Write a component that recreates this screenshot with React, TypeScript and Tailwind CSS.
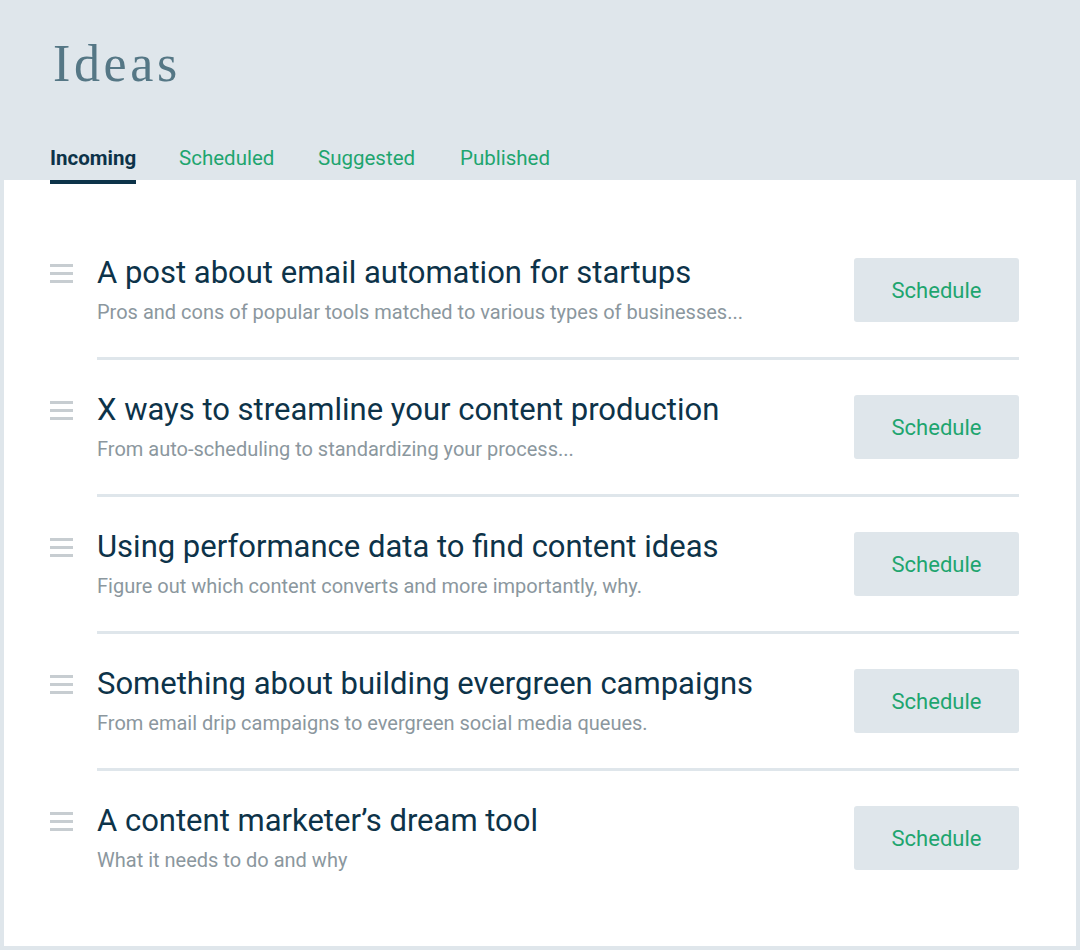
import React from 'react';

type Idea = { title: string; summary: string };

const ideas: Idea[] = [
  {
    title: 'A post about email automation for startups',
    summary: 'Pros and cons of popular tools matched to various types of businesses...',
  },
  {
    title: 'X ways to streamline your content production',
    summary: 'From auto-scheduling to standardizing your process...',
  },
  {
    title: 'Using performance data to find content ideas',
    summary: 'Figure out which content converts and more importantly, why.',
  },
  {
    title: 'Something about building evergreen campaigns',
    summary: 'From email drip campaigns to evergreen social media queues.',
  },
  {
    title: 'A content marketer\u2019s dream tool',
    summary: 'What it needs to do and why',
  },
];

// each tab has a fixed slot so the labels line up with the design
const tabs = [
  { label: 'Incoming', slot: 'w-[129px]' },
  { label: 'Scheduled', slot: 'w-[139px]' },
  { label: 'Suggested', slot: 'w-[142px]' },
  { label: 'Published', slot: '' },
];

const DragHandle = () => (
  <div className="mt-[6px] flex w-[23px] shrink-0 flex-col gap-[5px]">
    <span className="h-[3px] w-full bg-[#c7cdd1]" />
    <span className="h-[3px] w-full bg-[#c7cdd1]" />
    <span className="h-[3px] w-full bg-[#c7cdd1]" />
  </div>
);

const IdeaRow = ({ idea, first, last }: { idea: Idea; first: boolean; last: boolean }) => (
  <div className="flex items-start">
    <div className={first ? '' : 'pt-[35px]'}>
      <DragHandle />
    </div>
    <div
      className={`ml-[24px] flex flex-1 items-start justify-between ${first ? '' : 'pt-[35px]'} ${
        last ? '' : 'border-b-[3px] border-[#dfe6eb] pb-[35px]'
      }`}
    >
      <div>
        <h2 className="text-[31px] leading-[30px] text-[#0d3349]">{idea.title}</h2>
        <p className="mt-[15px] text-[20px] leading-[18px] text-[#8b979e]">{idea.summary}</p>
      </div>
      <button className="h-[64px] w-[165px] shrink-0 rounded-[3px] bg-[#dfe6eb] text-[22px] text-[#1ea56f]">
        Schedule
      </button>
    </div>
  </div>
);

export default function App() {
  return (
    <div className="min-h-[950px] w-[1080px] bg-[#dfe6eb] pb-[5px] font-['Roboto',sans-serif]">
      {/* Header */}
      <div className="flex h-[180px] flex-col">
        <h1 className="pl-[53px] pt-[38px] font-['Liberation_Serif',serif] text-[52px] leading-[52px] tracking-[0.07em] text-[#557785]">
          Ideas
        </h1>
        <nav className="mt-auto flex pb-[8px] pl-[50px]">
          {tabs.map((tab, i) => (
            <div key={tab.label} className={tab.slot}>
              <span
                className={`relative text-[20.5px] leading-[24px] ${
                  i === 0 ? 'font-bold text-[#0d3349]' : 'text-[#1ea56f]'
                }`}
              >
                {tab.label}
                {i === 0 && <span className="absolute -bottom-[14px] left-0 h-[4px] w-full bg-[#0d3349]" />}
              </span>
            </div>
          ))}
        </nav>
      </div>

      {/* Ideas list */}
      <div className="mx-[4px] bg-white pb-[76px] pl-[46px] pr-[57px] pt-[78px]">
        {ideas.map((idea, i) => (
          <IdeaRow key={idea.title} idea={idea} first={i === 0} last={i === ideas.length - 1} />
        ))}
      </div>
    </div>
  );
}
